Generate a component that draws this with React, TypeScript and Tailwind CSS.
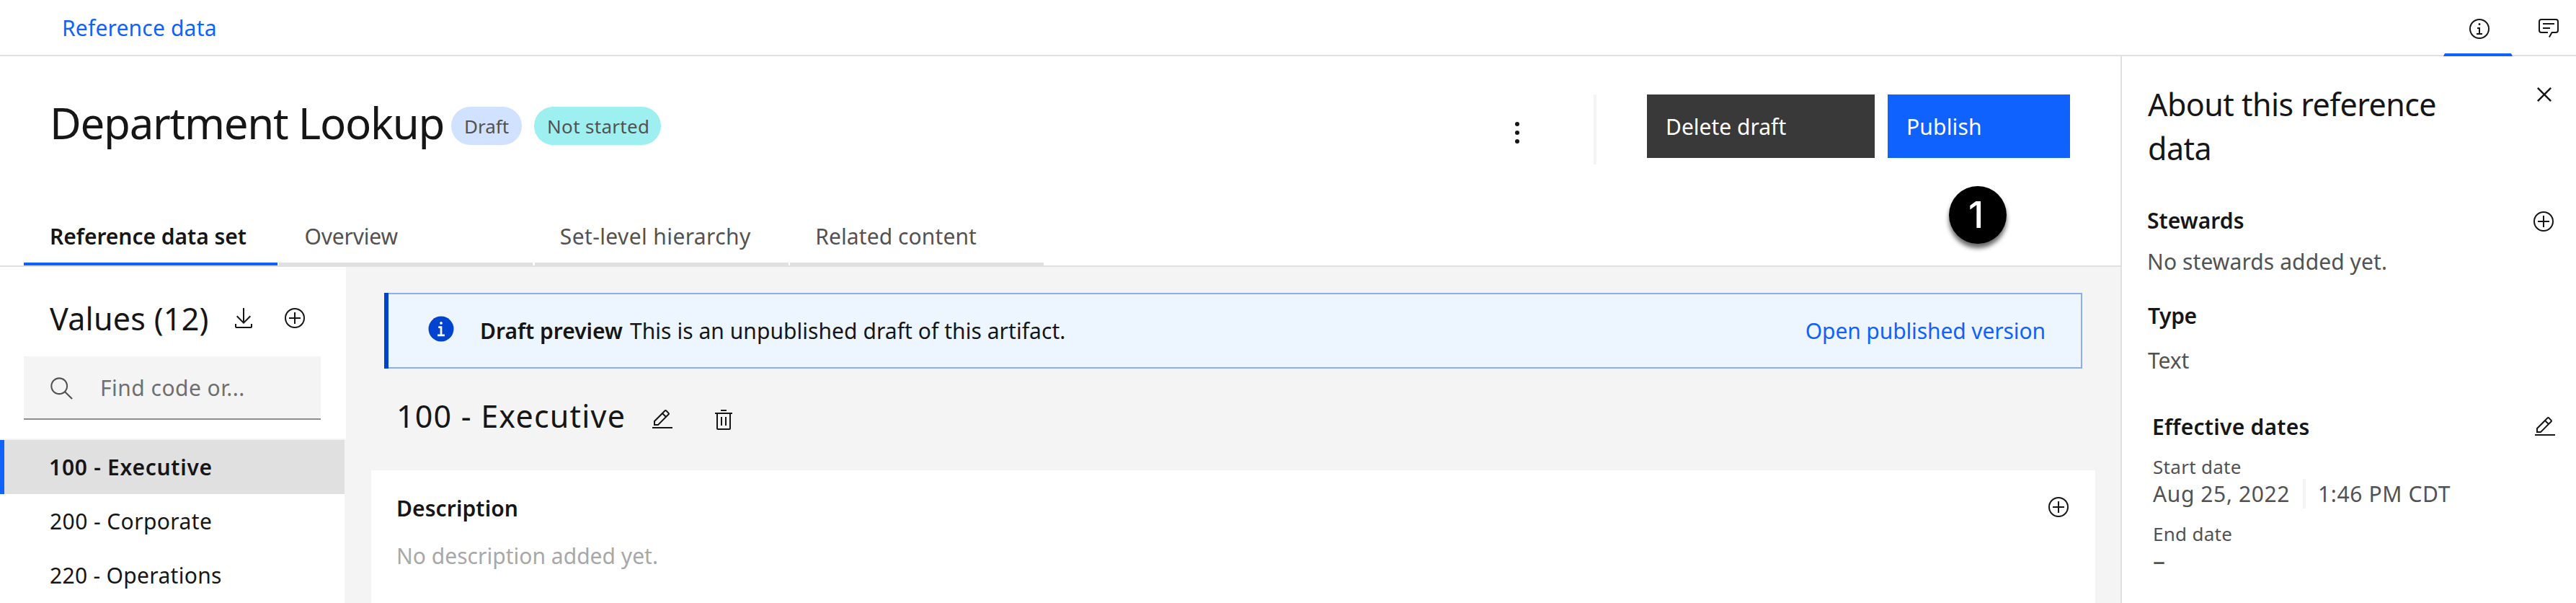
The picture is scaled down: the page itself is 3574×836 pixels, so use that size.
import type { ReactNode } from "react";

function Icon({ className, box = 32, children }: { className: string; box?: number; children: ReactNode }) {
  return (
    <svg className={`shrink-0 ${className}`} viewBox={`0 0 ${box} ${box}`} fill="currentColor" aria-hidden="true">
      {children}
    </svg>
  );
}

const AddIcon = ({ className = "" }: { className?: string }) => (
  <Icon className={`size-8 ${className}`}>
    <path d="M16 4A12 12 0 1 1 4 16 12 12 0 0 1 16 4m0-2A14 14 0 1 0 30 16 14 14 0 0 0 16 2Z" />
    <path d="M24 15H17V8H15v7H8v2h7v7h2V17h7Z" />
  </Icon>
);

const EditIcon = ({ className = "" }: { className?: string }) => (
  <Icon className={`size-8 ${className}`}>
    <path d="M2 26H30V28H2zM25.4 9c.8-.8.8-2 0-2.8l-3.6-3.6c-.8-.8-2-.8-2.8 0l-15 15V24h6.4L25.4 9zM20.4 4 24 7.6l-3 3L17.4 7 20.4 4zM6 22v-3.6l10-10 3.6 3.6-10 10H6z" />
  </Icon>
);

const TrashIcon = ({ className = "" }: { className?: string }) => (
  <Icon className={`size-8 ${className}`}>
    <path d="M12 12h2v12h-2zM18 12h2v12h-2zM4 6V8H6V28a2 2 0 0 0 2 2H24a2 2 0 0 0 2-2V8h2V6ZM8 28V8H24V28ZM12 2h8v2h-8z" />
  </Icon>
);

const DownloadIcon = ({ className = "" }: { className?: string }) => (
  <Icon className={`size-8 ${className}`}>
    <path d="M26 24v4H6V24H4v4a2 2 0 0 0 2 2H26a2 2 0 0 0 2-2V24zM26 14 24.59 12.59 17 20.17V2H15V20.17L7.41 12.59 6 14 16 24 26 14z" />
  </Icon>
);

const SearchIcon = ({ className = "" }: { className?: string }) => (
  <Icon box={16} className={`size-[35px] ${className}`}>
    <path d="M15 14.3 10.7 10c1.9-2.3 1.6-5.8-.7-7.7S4.2.7 2.3 3 .7 8.8 3 10.7c2 1.7 5 1.7 7 0l4.3 4.3.7-.7zM2 6.5C2 4 4 2 6.5 2S11 4 11 6.5 9 11 6.5 11 2 9 2 6.5z" />
  </Icon>
);

const InfoIcon = ({ className = "" }: { className?: string }) => (
  <Icon className={`size-8 ${className}`}>
    <path d="M17 22V14H13v2h2v6H12v2h8V22ZM16 8a1.5 1.5 0 1 0 1.5 1.5A1.5 1.5 0 0 0 16 8Z" />
    <path d="M16 30A14 14 0 1 1 30 16 14 14 0 0 1 16 30ZM16 4A12 12 0 1 0 28 16 12 12 0 0 0 16 4Z" />
  </Icon>
);

const CommentIcon = ({ className = "" }: { className?: string }) => (
  <Icon className={`size-8 ${className}`}>
    <path d="M17.74 30 16 29l4-7h6a2 2 0 0 0 2-2V8a2 2 0 0 0-2-2H6A2 2 0 0 0 4 8V20a2 2 0 0 0 2 2h9v2H6a4 4 0 0 1-4-4V8A4 4 0 0 1 6 4H26a4 4 0 0 1 4 4V20a4 4 0 0 1-4 4H21.16ZM8 10H24v2H8zM8 16H18v2H8z" />
  </Icon>
);

const CloseIcon = ({ className = "" }: { className?: string }) => (
  <Icon className={`size-10 ${className}`}>
    <path d="M24 9.4 22.6 8 16 14.6 9.4 8 8 9.4 14.6 16 8 22.6 9.4 24 16 17.4 22.6 24 24 22.6 17.4 16 24 9.4z" />
  </Icon>
);

const tabs = [
  { label: "Reference data set", style: "border-[#0f62fe] pl-[36px] font-semibold tracking-[-0.03px] text-[#161616]" },
  { label: "Overview", style: "border-[#e0e0e0] pl-[35px] tracking-[-0.17px] text-[#525252]" },
  { label: "Set-level hierarchy", style: "border-[#e0e0e0] pl-[35px] tracking-[0.39px] text-[#525252]" },
  { label: "Related content", style: "border-[#e0e0e0] pl-[35px] tracking-[0.1px] text-[#525252]" },
];

const rows = [
  { label: "100 - Executive", style: "border-l-[6px] border-[#0f62fe] bg-[#e0e0e0] pl-[62px] font-semibold tracking-[0.72px]" },
  { label: "200 - Corporate", style: "bg-white pl-[69px] tracking-[0.41px]" },
  { label: "220 - Operations", style: "bg-white pl-[69px] tracking-[0.31px]" },
];

function TopBar() {
  return (
    <header className="flex h-[78px] shrink-0 items-start border-b-2 border-[#e0e0e0]">
      <a className="mt-[19px] ml-[86px] tracking-[0.18px] text-[#0f62fe]">Reference data</a>
      <button className="ml-auto flex h-[78px] w-24 shrink-0 items-start justify-center border-x-2 border-b-4 border-x-transparent border-b-[#0f62fe] pt-6">
        <InfoIcon className="mr-[-4px]" />
      </button>
      <CommentIcon className="mt-[22px] mr-[22px] ml-[34px]" />
    </header>
  );
}

function Hero() {
  return (
    <section className="relative flex h-[292px] shrink-0 flex-col border-b-2 border-[#e0e0e0]">
      <div className="flex h-[222px] items-start pr-[70px] pl-[69px]">
        <h1 className="mt-[52px] w-[557px] text-[60px] leading-[80px] tracking-[-1.29px]">Department Lookup</h1>
        <span className="mt-[70px] h-[53px] w-[98px] rounded-full bg-[#d0e2ff] pt-[10px] pl-[18px] text-[26px] leading-[34px] text-[#525252]">
          Draft
        </span>
        <span className="mt-[70px] ml-[17px] h-[53px] w-[176px] rounded-full bg-[#9ef0f0] pt-[10px] pl-[18px] text-[26px] leading-[34px] tracking-[0.32px] text-[#525252]">
          Not started
        </span>
        <Icon className="mt-[82px] ml-auto size-12">
          <circle cx="16" cy="8" r="2" />
          <circle cx="16" cy="16" r="2" />
          <circle cx="16" cy="24" r="2" />
        </Icon>
        <div className="mt-[53px] ml-[82px] h-[97px] w-1 bg-[#f4f4f4]" />
        <button className="mt-[53px] ml-[70px] flex h-[88px] w-[316px] bg-[#393939] pt-[25px] pl-[26px] text-white">
          Delete draft
        </button>
        <button className="mt-[53px] ml-[18px] flex h-[88px] w-[253px] bg-[#0f62fe] pt-[25px] pl-[26px] tracking-[0.17px] text-white">
          Publish
        </button>
      </div>
      <nav className="flex h-[68px] gap-[2.4px] pl-[33px]">
        {tabs.map((t) => (
          <div key={t.label} className={`w-[352px] border-b-4 pt-2 ${t.style}`}>
            {t.label}
          </div>
        ))}
      </nav>
      <div className="absolute top-[180px] left-[2704px] size-20 rounded-full bg-black pt-[10px] pr-[5px] text-center font-[Inter,sans-serif] text-[51px] leading-[60px] font-medium text-white shadow-[0_6px_6px_rgba(0,0,0,0.6)]">
        1
      </div>
    </section>
  );
}

function ValuesPanel() {
  return (
    <section className="flex w-[480px] shrink-0 flex-col">
      <div className="h-[240px] shrink-0 border-b-2 border-[#f4f4f4] bg-white">
        <div className="flex h-[124px] items-start pt-[41px] pl-[69px]">
          <h2 className="w-[253px] text-[43px] leading-[61px] tracking-[0.27px]">Values (12)</h2>
          <DownloadIcon className="mt-[14px]" />
          <AddIcon className="mt-[14px] ml-[39px]" />
        </div>
        <div className="ml-[33px] flex h-[88px] w-[412px] items-start border-b-2 border-[#8d8d8d] bg-[#f4f4f4] pt-6 pl-[35px]">
          <SearchIcon className="mt-[3px] text-[#525252]" />
          <span className="ml-[36px] tracking-[0.48px] text-[#6f6f6f]">Find code or...</span>
        </div>
      </div>
      {rows.map((r) => (
        <div key={r.label} className={`h-[75px] w-[478px] shrink-0 pt-[18px] ${r.style}`}>
          {r.label}
        </div>
      ))}
      <div className="w-[478px] flex-1 bg-white" />
    </section>
  );
}

function Detail() {
  return (
    <section className="flex min-w-0 flex-1 flex-col">
      <div className="mt-9 ml-[53px] flex h-[105px] w-[2356px] shrink-0">
        <div className="w-[6px] bg-[#0043ce]" />
        <div className="flex flex-1 items-start border-y-2 border-r-2 border-[#8eaeeb] bg-[#edf5ff]">
          <Icon className="mt-7 ml-[53px] size-10 text-[#0043ce]">
            <circle cx="16" cy="16" r="14" />
            <path fill="white" d="M16 8a1.5 1.5 0 1 1-1.5 1.5A1.5 1.5 0 0 1 16 8ZM20 24.1H12V21.9h2.9V15.1H13V12.9h4.1v9H20Z" />
          </Icon>
          <strong className="mt-[31px] ml-[34px] w-[208px] font-semibold">Draft preview</strong>
          <span className="mt-[31px] tracking-[0.05px]">This is an unpublished draft of this artifact.</span>
          <a className="mt-[31px] mr-[49px] ml-auto tracking-[-0.1px] text-[#0f62fe]">Open published version</a>
        </div>
      </div>
      <div className="flex h-[141px] shrink-0 items-start pt-[35px] pl-[70px]">
        <h2 className="w-[353px] text-[43px] leading-[61px] tracking-[1.21px]">100 - Executive</h2>
        <EditIcon className="mt-[20px]" />
        <TrashIcon className="mt-[20px] ml-[53px]" />
      </div>
      <div className="ml-[35px] flex w-[2392px] flex-1 items-start justify-between bg-white px-[35px] pt-[33px]">
        <div>
          <h3 className="font-semibold tracking-[0.1px]">Description</h3>
          <p className="mt-[26px] tracking-[0.02px] text-[#a8a8a8]">No description added yet.</p>
        </div>
        <AddIcon className="mt-[2px]" />
      </div>
    </section>
  );
}

function AboutPanel() {
  return (
    <aside className="flex flex-1 flex-col border-l-2 border-[#e0e0e0] pl-[35px] text-[#525252]">
      <div className="flex items-start justify-between pt-[33px] pr-6">
        <h2 className="mt-[3px] ml-px w-[420px] text-[43px] leading-[61px] tracking-[-0.55px] text-[#161616]">
          About this reference data
        </h2>
        <CloseIcon className="text-[#161616]" />
      </div>
      <div className="mt-[50px] flex items-start justify-between pr-[29px] text-[#161616]">
        <h3 className="font-semibold tracking-[0.05px]">Stewards</h3>
        <AddIcon className="mt-[5px]" />
      </div>
      <p className="mt-[17px] tracking-[0.09px]">No stewards added yet.</p>
      <h3 className="mt-[35px] ml-px font-semibold tracking-[-0.36px] text-[#161616]">Type</h3>
      <p className="mt-[22px] ml-px tracking-[-0.06px]">Text</p>
      <div className="mt-[52px] flex items-start justify-between pr-[27px] pl-[7px] text-[#161616]">
        <h3 className="font-semibold tracking-[0.25px]">Effective dates</h3>
        <EditIcon className="mt-[4px]" />
      </div>
      <div className="flex flex-col pl-[8px]">
        <span className="mt-[18px] text-[26px] leading-[34px] tracking-[0.3px]">Start date</span>
        <div className="flex h-[41px] items-center">
          <span className="w-[208px] tracking-[0.6px]">Aug 25, 2022</span>
          <div className="h-[41px] w-1 bg-[#f4f4f4]" />
          <span className="ml-[17px] tracking-[0.62px]">1:46 PM CDT</span>
        </div>
        <span className="mt-[18px] text-[26px] leading-[34px] tracking-[0.29px]">End date</span>
        <span className="text-[34px]">–</span>
      </div>
    </aside>
  );
}

export default function App() {
  return (
    <div className="flex h-[836px] w-[3574px] flex-col overflow-hidden bg-white font-['Noto_Sans',sans-serif] text-[30px] leading-[40px] text-[#161616]">
      <TopBar />
      <div className="flex min-h-0 flex-1">
        <main className="flex w-[2942px] shrink-0 flex-col">
          <Hero />
          <div className="flex min-h-0 flex-1 bg-[#f4f4f4]">
            <ValuesPanel />
            <Detail />
          </div>
        </main>
        <AboutPanel />
      </div>
    </div>
  );
}
